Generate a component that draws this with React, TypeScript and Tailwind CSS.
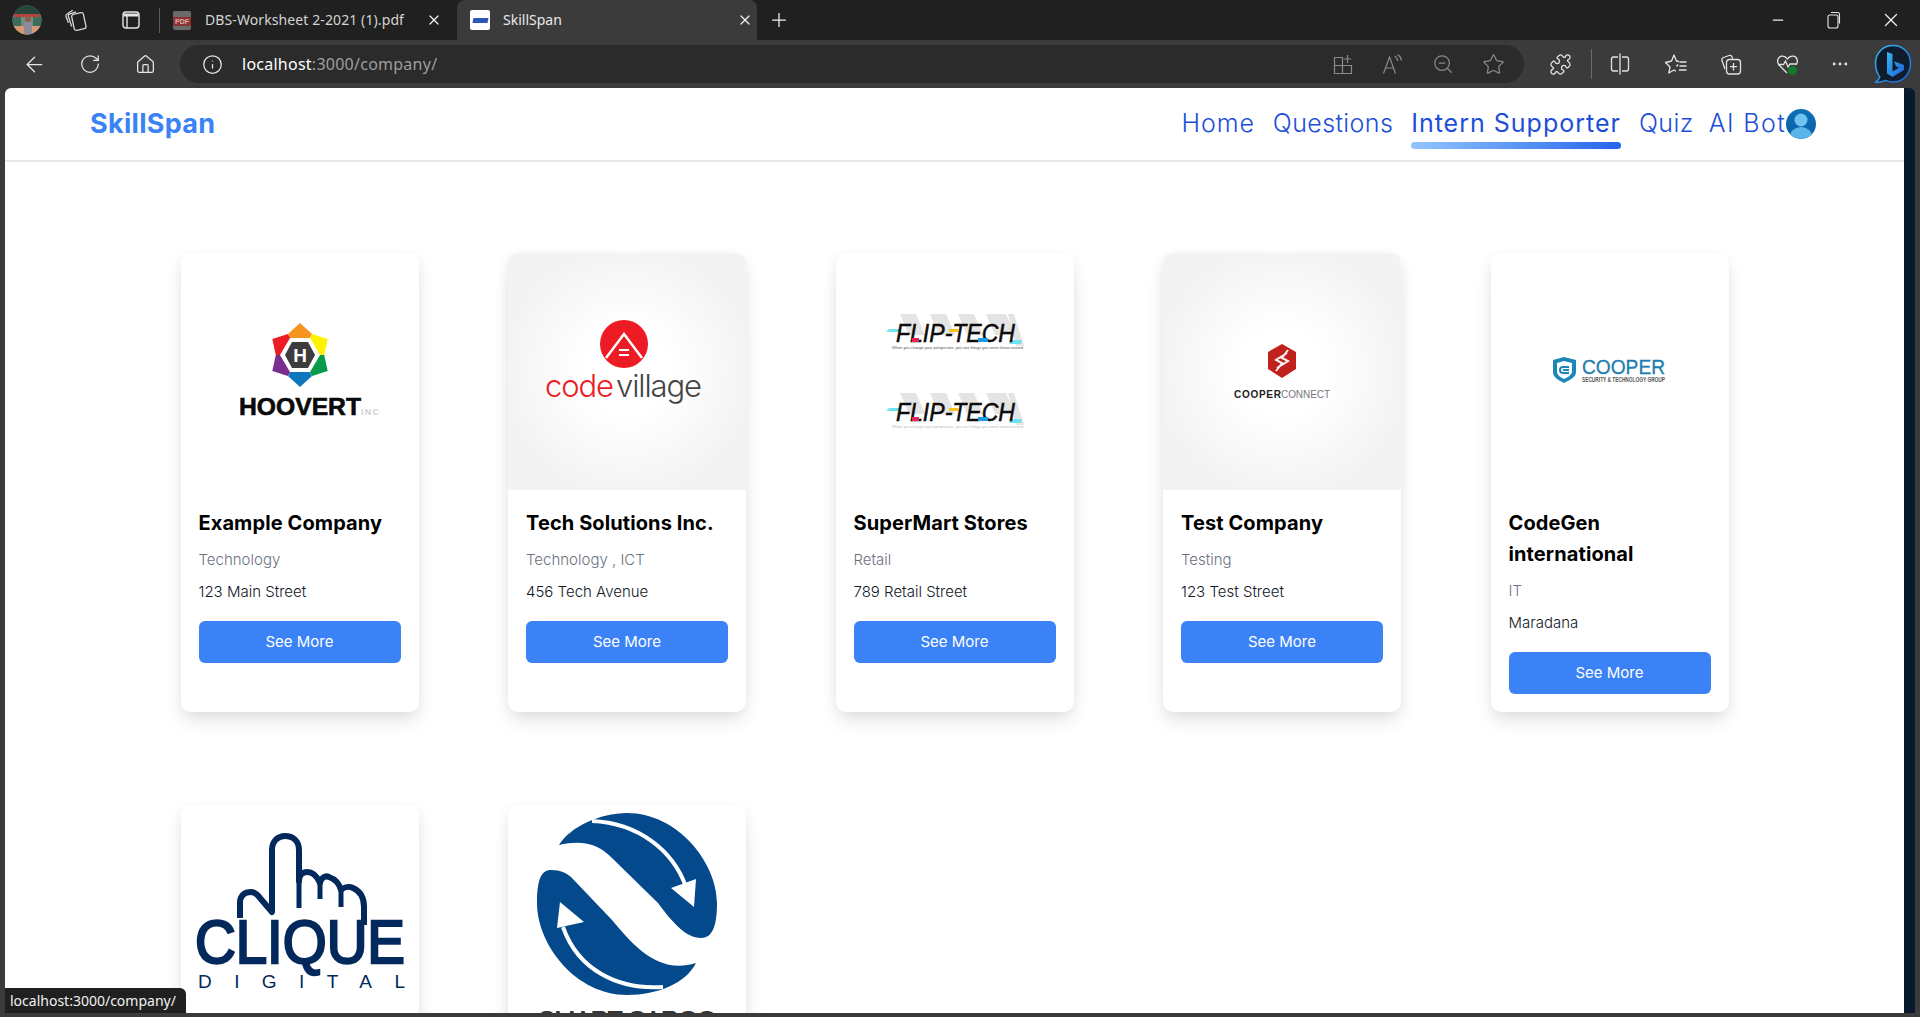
import type { ReactNode } from "react";
import {
  ArrowLeft,
  Ellipsis,
  House,
  Info,
  Minus,
  Plus,
  Puzzle,
  RotateCw,
  Star,
  X,
  ZoomOut,
} from "lucide-react";

const stroke = { strokeWidth: 1.25, absoluteStrokeWidth: true };

function IconSlot({ className, children }: { className: string; children: ReactNode }) {
  return <div className={`flex shrink-0 items-center justify-center ${className}`}>{children}</div>;
}

function Profile() {
  return (
    <svg width="30" height="30" viewBox="0 0 30 30">
      <clipPath id="profile">
        <circle cx="15" cy="15" r="14.5" />
      </clipPath>
      <g clipPath="url(#profile)">
        <rect width="30" height="30" fill="#6f8f7f" />
        <rect width="30" height="10" fill="#27463c" />
        <rect x="2" y="9" width="26" height="3" fill="#b8433d" />
        <rect y="12" width="9" height="9" fill="#3f6b5b" />
        <rect x="21" y="12" width="9" height="9" fill="#3f6b5b" />
        <rect y="21" width="30" height="9" fill="#d59a74" />
        <circle cx="16" cy="14" r="3" fill="#8a5f4a" />
        <rect x="12" y="17" width="8" height="13" fill="#8d8b98" />
      </g>
    </svg>
  );
}

function TabsIcon() {
  return (
    <svg width="24" height="24" viewBox="0 0 22 22" fill="none" stroke="#d8d8d8" strokeWidth="1.2">
      <rect x="8" y="5" width="11" height="15" rx="2" transform="rotate(-12 13 12)" />
      <path d="M7 17 4 7.500c-.3-1 .2-1.800 1.100-2L11 3.500" />
      <path d="M4 13.500 1.800 7.500c-.3-1 .2-1.700 1-2L8 2" />
    </svg>
  );
}

function VerticalTabsIcon() {
  return (
    <svg width="20" height="20" viewBox="0 0 20 20" fill="none" stroke="#e4e4e4" strokeWidth="1.4">
      <rect x="2" y="2" width="16" height="16" rx="3" />
      <path d="M6 5.500V18" />
      <path d="M2.500 5h15" strokeWidth="3" />
    </svg>
  );
}

function PdfIcon() {
  return (
    <div className="relative h-[19px] w-[18px] rounded-[2px] bg-[#6a6a6a]">
      <div className="absolute left-0 top-[6px] flex h-[9px] w-[18px] items-center justify-center bg-[#8c3232] font-['Liberation_Sans',sans-serif] text-[7px] font-bold leading-none text-[#d9b0b0]">
        PDF
      </div>
    </div>
  );
}

function Favicon() {
  return (
    <div className="flex h-5 w-5 items-center justify-center rounded-[2px] bg-white">
      <div className="h-[5px] w-[15px] -skew-x-12 bg-[#2c55b5]" />
    </div>
  );
}

function RestoreIcon() {
  return (
    <svg width="14" height="18" viewBox="0 0 14 18" fill="none" stroke="#e6e6e6" strokeWidth="1.1">
      <rect x="1" y="4" width="10" height="13" rx="2" />
      <path d="M4 1.500h6.500c1.200 0 2 .8 2 2v9" />
    </svg>
  );
}

function AddTileIcon() {
  return (
    <svg width="20" height="22" viewBox="0 0 20 22" fill="none" stroke="#8a8a8a" strokeWidth="1.2">
      <path d="M1.500 4.500h8v8h-8zM1.500 12.500h8v8h-8zM9.500 12.500h9v8h-9z" />
      <path d="M14.500 2v8M10.800 6h7.400" />
    </svg>
  );
}

function ReadAloudIcon() {
  return (
    <svg width="22" height="22" viewBox="0 0 22 22" fill="none" stroke="#8a8a8a" strokeWidth="1.2">
      <path d="M1.500 20.500 7.500 4l6 16.500M3.700 15h7.600" />
      <path d="M12.500 3c2 1 3 2.600 3.200 5M15.500 1.500c2.300 1.400 3.700 3.400 4 6" />
    </svg>
  );
}

function SplitIcon() {
  return (
    <svg width="20" height="24" viewBox="0 0 20 24" fill="none" stroke="#e4e4e4" strokeWidth="1.3">
      <path d="M8 5H3.500C2.200 5 1.500 5.800 1.500 7v10c0 1.200.7 2 2 2H8M12 5h4.500c1.300 0 2 .8 2 2v10c0 1.200-.7 2-2 2H12" />
      <path d="M10 1.500v21" />
    </svg>
  );
}

function FavoritesIcon() {
  return (
    <svg width="24" height="24" viewBox="0 0 24 24" fill="none" stroke="#e4e4e4" strokeWidth="1.3" strokeLinejoin="round">
      <path d="M15 9.500 12.500 9 10 3 7.500 9 1.500 10.500 6 15 4.800 21 10 18l2 1.200M14 12.500l-1.500 2" />
      <path d="M15.500 10h7M15.500 14h7M15 18h7.500" />
    </svg>
  );
}

function CollectionsIcon() {
  return (
    <svg width="22" height="24" viewBox="0 0 22 24" fill="none" stroke="#e4e4e4" strokeWidth="1.3">
      <path d="M5 17 2 8.500c-.5-1.500.2-2.500 1.500-3L9 3.500c1.500-.5 2.500 0 3 1.200l.5 2" />
      <rect x="6.500" y="7.500" width="14" height="14.500" rx="3" />
      <path d="M13.500 11v7.500M10 14.700h7" />
    </svg>
  );
}

function HeartIcon() {
  return (
    <svg width="24" height="24" viewBox="0 0 24 24" fill="none">
      <path
        d="M11 21 3 13C.5 10 1.500 5 5.500 4.200c2.500-.4 4.500.6 6 2.800 1.500-2.200 3.500-3.200 6-2.800C21.500 5 22.500 10 20 13"
        stroke="#e4e4e4"
        strokeWidth="1.300"
      />
      <path d="M2 12.500h5.500l2-3.500 2.500 6 2-3h6" stroke="#e4e4e4" strokeWidth="1.300" />
      <circle cx="16.500" cy="18.500" r="4.500" fill="#117a2b" />
    </svg>
  );
}

function BingIcon() {
  return (
    <svg width="40" height="40" viewBox="0 0 40 40" fill="none">
      <defs>
        <linearGradient id="bingRing" x1="0" y1="0" x2="1" y2="1">
          <stop offset="0" stopColor="#35c1f1" />
          <stop offset="1" stopColor="#1a5fe0" />
        </linearGradient>
        <linearGradient id="bingB" x1="0" y1="0" x2="1" y2="1">
          <stop offset="0" stopColor="#37b8f0" />
          <stop offset="1" stopColor="#1d62d8" />
        </linearGradient>
      </defs>
      <path
        d="M20 1.500C9.500 1.500 2.500 9.500 2.500 19.500c0 5.500 1.700 10 4.300 13.500-.5 1.800-2 3.500-4 5.200 3.500.4 7-.3 9.800-1.800 2.300 1 4.800 1.600 7.400 1.600 10 0 17.500-8 17.500-18.500S30 1.500 20 1.500z"
        fill="#101c2c"
        stroke="url(#bingRing)"
        strokeWidth="1.500"
      />
      <path d="M14 8l5.500 2v17.500l6.500-3.800-3-1.500-2-5 10 3.800v5L19.500 33 14 29.500z" fill="url(#bingB)" />
    </svg>
  );
}

function UserAvatar() {
  return (
    <svg width="30" height="30" viewBox="0 0 30 30">
      <defs>
        <linearGradient id="avatarBg" x1="0" y1="0" x2="0" y2="1">
          <stop offset="0" stopColor="#0d6fb8" />
          <stop offset="1" stopColor="#0b5fa5" />
        </linearGradient>
      </defs>
      <clipPath id="avatarClip">
        <circle cx="15" cy="15" r="15" />
      </clipPath>
      <g clipPath="url(#avatarClip)">
        <rect width="30" height="30" fill="url(#avatarBg)" />
        <circle cx="15" cy="11" r="6.500" fill="#6fc3ee" />
        <ellipse cx="15" cy="27" rx="11" ry="9" fill="#58b6e8" />
      </g>
    </svg>
  );
}

function BrowserChrome() {
  return (
    <div className="shrink-0">
      <div className="flex h-10 items-center bg-[#202020] font-['Noto_Sans',sans-serif] text-sm text-[#d4d4d4]">
        <IconSlot className="ml-3 w-[30px]">
          <Profile />
        </IconSlot>
        <IconSlot className="ml-[22px] w-6">
          <TabsIcon />
        </IconSlot>
        <IconSlot className="ml-[31px] w-6">
          <VerticalTabsIcon />
        </IconSlot>
        <div className="ml-[16px] h-[25px] w-px bg-[#5a5a5a]" />
        <div className="flex h-full w-[297px] shrink-0 items-center pl-[13px]">
          <PdfIcon />
          <span className="ml-[14px] w-[202px] truncate tracking-[0.1px]">DBS-Worksheet 2-2021 (1).pdf</span>
          <X className="ml-[19px] text-[#f0f0f0]" size={16} {...stroke} />
        </div>
        <div className="flex h-full w-[300px] shrink-0 items-center rounded-t-lg bg-[#3b3b3b] pl-[13px] text-[#e8e8e8]">
          <Favicon />
          <span className="ml-[13px] w-[234px]">SkillSpan</span>
          <X className="text-[#f0f0f0]" size={16} {...stroke} />
        </div>
        <IconSlot className="ml-[9px] w-[26px]">
          <Plus className="text-[#f0f0f0]" size={22} {...stroke} />
        </IconSlot>
        <div className="ml-auto flex items-center">
          <IconSlot className="w-14">
            <Minus className="text-[#f0f0f0]" size={16} {...stroke} />
          </IconSlot>
          <IconSlot className="w-14">
            <RestoreIcon />
          </IconSlot>
          <IconSlot className="w-[58px]">
            <X className="text-[#f0f0f0]" size={22} {...stroke} />
          </IconSlot>
        </div>
      </div>
      <div className="flex h-12 items-center bg-[#3b3b3b] text-[#e6e6e6]">
        <IconSlot className="ml-[6px] w-14">
          <ArrowLeft size={25} {...stroke} />
        </IconSlot>
        <IconSlot className="w-14">
          <RotateCw size={22} {...stroke} />
        </IconSlot>
        <IconSlot className="w-[55px]">
          <House size={21} {...stroke} />
        </IconSlot>
        <div className="ml-[7px] flex h-[38px] w-[1344px] shrink-0 items-center rounded-full bg-[#2b2b2b]">
          <IconSlot className="ml-[20px] w-[24px]">
            <Info size={21} {...stroke} />
          </IconSlot>
          <span className="ml-[18px] font-['Noto_Sans',sans-serif] text-[16px] tracking-[0.25px] text-white">
            localhost<span className="text-[#9e9e9e]">:3000/company/</span>
          </span>
          <div className="ml-auto flex items-center pr-[6px] text-[#8a8a8a]">
            <IconSlot className="w-[50px]">
              <AddTileIcon />
            </IconSlot>
            <IconSlot className="w-[50px]">
              <ReadAloudIcon />
            </IconSlot>
            <IconSlot className="w-[50px]">
              <ZoomOut size={22} {...stroke} />
            </IconSlot>
            <IconSlot className="w-[50px]">
              <Star size={23} {...stroke} />
            </IconSlot>
          </div>
        </div>
        <IconSlot className="ml-[14px] w-[44px]">
          <Puzzle size={23} {...stroke} />
        </IconSlot>
        <div className="ml-[9px] h-[30px] w-px bg-[#6a6a6a]" />
        <IconSlot className="ml-[6px] w-[44px]">
          <SplitIcon />
        </IconSlot>
        <IconSlot className="ml-[12px] w-[44px]">
          <FavoritesIcon />
        </IconSlot>
        <IconSlot className="ml-[11px] w-[44px]">
          <CollectionsIcon />
        </IconSlot>
        <IconSlot className="ml-[13px] w-[44px]">
          <HeartIcon />
        </IconSlot>
        <IconSlot className="ml-[8px] w-[44px]">
          <Ellipsis size={20} {...stroke} />
        </IconSlot>
        <IconSlot className="ml-[9px] w-[44px]">
          <BingIcon />
        </IconSlot>
      </div>
    </div>
  );
}

function Header() {
  return (
    <header className="flex h-[74px] shrink-0 items-center justify-between border-b-2 border-[#e5e7eb] pl-[85px] pr-[88px]">
      <span className="text-[27px] font-bold tracking-[0.3px] text-[#3b82f6]">SkillSpan</span>
      <nav className="flex items-center text-[25px] font-light tracking-[0.4px] text-[#1d4ed8]">
        <a className="mr-[18px] tracking-[0.9px]">Home</a>
        <a className="mr-[18px]">Questions</a>
        <a className="relative mr-[18px] font-normal tracking-[1px]">
          Intern Supporter
          <span className="absolute left-0 right-0 top-[37px] h-[7px] rounded bg-gradient-to-r from-[#93c5fd] to-[#2563eb]" />
        </a>
        <a className="mr-[15px]">Quiz</a>
        <a className="tracking-[1.4px]">AI Bot</a>
        <UserAvatar />
      </nav>
    </header>
  );
}

function HoovertLogo() {
  const colors = ["#f7941d", "#fff200", "#0a9b4a", "#0e76bc", "#7b2d90", "#ed1c24"];
  return (
    <svg width="238" height="237" viewBox="0 0 238 237">
      <g transform="translate(119 102)">
        {colors.map((color, i) => (
          <path key={color} d="M0 0-12-21 0-32 12-21z" fill={color} transform={`rotate(${i * 60})`} />
        ))}
        <path d="M-20 0-10-17H10L20 0 10 17H-10z" fill="#fff" />
        <path d="M-15 0-8-13H8L15 0 8 13H-8z" fill="#3c3c3c" />
        <text y="7" textAnchor="middle" fontFamily="Liberation Sans, sans-serif" fontWeight="700" fontSize="19" fill="#fff">
          H
        </text>
      </g>
      <text x="58" y="162" textLength="122" lengthAdjust="spacingAndGlyphs" fontFamily="Liberation Sans, sans-serif" fontWeight="700" fontSize="24" fill="#0a0a0a" stroke="#0a0a0a" strokeWidth="0.6">
        HOOVERT
      </text>
      <text x="180" y="162" textLength="18" fontFamily="Liberation Sans, sans-serif" fontWeight="700" fontSize="9" fill="#cfcfcf">
        INC
      </text>
    </svg>
  );
}

function CodeVillageLogo() {
  return (
    <svg width="238" height="237" viewBox="0 0 238 237">
      <circle cx="116" cy="91" r="24" fill="#ed1c24" />
      <path d="M98 105 116 81 134 105" fill="none" stroke="#fff" strokeWidth="2.500" />
      <path d="M111 97h10M111 102h10" stroke="#fff" strokeWidth="2" />
      <text x="37" y="144" textLength="69" fontFamily="Inter, sans-serif" fontWeight="300" fontSize="31" fill="#ed1c24">
        code
      </text>
      <text x="108" y="144" textLength="86" fontFamily="Inter, sans-serif" fontWeight="300" fontSize="31" fill="#444">
        village
      </text>
    </svg>
  );
}

function FlipTechMark({ y, tagline }: { y: number; tagline: string }) {
  return (
    <g transform={`translate(50 ${y})`}>
      <path d="M14 0h16l9 21H23zM44 0h16l9 21H53zM72 0h16l9 21H81zM100 0h20l9 21H109zM122 0h6l10 32h-8z" fill="#e4e4e4" />
      <path d="M0 18 3 15H14L12 18zM126 26h10l-1 4H123z" fill="#6fe3ee" />
      <text x="10" y="28" textLength="119" lengthAdjust="spacingAndGlyphs" fontFamily="Liberation Sans, sans-serif" fontStyle="italic" fontSize="25" fill="#0c0c0c" stroke="#0c0c0c" strokeWidth="0.5">
        FLIP-TECH
      </text>
      <rect x="26" y="24" width="7" height="4" fill="#e8265e" />
      <rect x="63" y="15" width="9" height="3" fill="#f6c21c" />
      <rect x="92" y="24" width="10" height="4" fill="#1f9be0" />
      <text x="6" y="35" textLength="131" fontFamily="Liberation Sans, sans-serif" fontSize="4" fill={tagline}>
        When you change your perspective, you see things you never knew existed
      </text>
    </g>
  );
}

function FlipTechLogo() {
  return (
    <svg width="238" height="237" viewBox="0 0 238 237">
      <FlipTechMark y={61} tagline="#555" />
      <FlipTechMark y={140} tagline="#bbb" />
    </svg>
  );
}

function CooperConnectLogo() {
  return (
    <svg width="238" height="237" viewBox="0 0 238 237">
      <path d="M119 91 133 99V116L119 125 105 116V99z" fill="#c1211c" />
      <path d="M124 100 113 107 119 110 113 118M114 115 125 108 119 105 125 97" fill="none" stroke="#f4f4f4" strokeWidth="2" />
      <text x="71" y="145" textLength="47" fontFamily="Liberation Sans, sans-serif" fontWeight="700" fontSize="10" fill="#222">
        COOPER
      </text>
      <text x="118" y="145" textLength="49" fontFamily="Liberation Sans, sans-serif" fontSize="10" fill="#777">
        CONNECT
      </text>
    </svg>
  );
}

function CooperLogo() {
  return (
    <svg width="238" height="237" viewBox="0 0 238 237">
      <path d="M73 104 85 107V119C85 124 79 127 73 130 67 127 62 124 62 119V107z" fill="#1c86b8" />
      <path d="M73 108 81 110V118C81 122 77 124 73 126 69 124 66 122 66 118V110z" fill="#fff" />
      <path d="M78 114H72a3 3 0 1 0 0 6H78M72 117H78" fill="none" stroke="#1c86b8" strokeWidth="2" />
      <text x="91" y="121" textLength="83" lengthAdjust="spacingAndGlyphs" fontFamily="Liberation Sans, sans-serif" fontSize="21" fill="#1c7db0" stroke="#1c7db0" strokeWidth="0.3">
        COOPER
      </text>
      <text x="91" y="129" textLength="83" lengthAdjust="spacingAndGlyphs" fontFamily="Liberation Sans, sans-serif" fontWeight="700" fontSize="7" fill="#555">
        SECURITY &amp; TECHNOLOGY GROUP
      </text>
    </svg>
  );
}

function CliqueLogo() {
  return (
    <svg width="238" height="237" viewBox="0 0 238 237">
      <path
        d="M59 113V98C59 90 64 87 70 87 74 87 77 90 79 93L91 107V45C91 36 97 31 104 31 112 31 118 36 118 45V76C118 70 122 67 126 67 132 67 136 71 139 78 140 73 144 70 148 72 154 74 158 78 160 85 163 82 168 81 172 83 179 86 183 92 183 102V120"
        fill="none"
        stroke="#03295c"
        strokeWidth="6"
        strokeLinejoin="round"
      />
      <path d="M118 76V103M139 78V94M160 85V102" fill="none" stroke="#03295c" strokeWidth="5" />
      <text x="14" y="158" textLength="210" lengthAdjust="spacingAndGlyphs" fontFamily="Liberation Sans, sans-serif" fontSize="62" fill="#03295c" stroke="#03295c" strokeWidth="2.500">
        CLIQUE
      </text>
      <text x="17" y="183" textLength="207" fontFamily="Liberation Sans, sans-serif" fontSize="19" fill="#03295c">
        DIGITAL
      </text>
    </svg>
  );
}

function SmartCargoLogo() {
  return (
    <svg width="238" height="237" viewBox="0 0 238 237">
      <path
        d="M51 40C62 22 92 8 119 8 170 8 209 58 209 98 209 122 204 133 193 133 178 133 165 118 150 98L104 53C92 40 75 34 51 40z"
        fill="#04498c"
      />
      <path
        d="M188 158C178 178 150 190 119 190 68 190 29 140 29 98 29 75 33 65 43 65 53 65 58 68 63 72L104 115C125 140 150 170 188 158z"
        fill="#04498c"
      />
      <path d="M84 16C130 18 165 45 178 82" fill="none" stroke="#fff" strokeWidth="4" />
      <path d="M188 74 186 102 163 83z" fill="#fff" />
      <path d="M55 122C70 165 110 185 155 182" fill="none" stroke="#fff" strokeWidth="4" />
      <path d="M52 97 76 117 49 123z" fill="#fff" />
      <text x="30" y="224" textLength="179" fontFamily="Liberation Sans, sans-serif" fontSize="26" fill="#333">
        SMART CARGO
      </text>
    </svg>
  );
}

interface Company {
  name: string;
  category?: string;
  address?: string;
  logo: ReactNode;
  shaded?: boolean;
}

const companies: Company[] = [
  { name: "Example Company", category: "Technology", address: "123 Main Street", logo: <HoovertLogo /> },
  { name: "Tech Solutions Inc.", category: "Technology , ICT", address: "456 Tech Avenue", logo: <CodeVillageLogo />, shaded: true },
  { name: "SuperMart Stores", category: "Retail", address: "789 Retail Street", logo: <FlipTechLogo /> },
  { name: "Test Company", category: "Testing", address: "123 Test Street", logo: <CooperConnectLogo />, shaded: true },
  { name: "CodeGen international", category: "IT", address: "Maradana", logo: <CooperLogo /> },
  { name: "Clique Digital", logo: <CliqueLogo /> },
  { name: "Smart Cargo", logo: <SmartCargoLogo /> },
];

function CompanyCard({ company }: { company: Company }) {
  return (
    <div className="flex flex-col overflow-hidden rounded-[10px] bg-white shadow-[0_10px_20px_-3px_rgba(0,0,0,0.12),0_2px_12px_rgba(0,0,0,0.04)]">
      <div
        className={
          company.shaded
            ? "h-[237px] shrink-0 bg-[radial-gradient(circle,#ffffff_25%,#f3f3f3_75%)]"
            : "h-[237px] shrink-0 bg-white"
        }
      >
        {company.logo}
      </div>
      {company.category ? (
        <div className="flex flex-1 flex-col p-[18px]">
          <h2 className="text-[20px] font-bold leading-[31px] tracking-[0.1px] text-black">{company.name}</h2>
          <p className="mt-[9px] text-[15px] font-light leading-6 text-[#6b7280]">{company.category}</p>
          <p className="mt-2 text-[15px] font-light leading-6 text-[#111827]">{company.address}</p>
          <button className="mt-[17px] h-[42px] w-full rounded-md bg-[#3b82f6] text-[15px] text-white">See More</button>
        </div>
      ) : null}
    </div>
  );
}

export default function App() {
  return (
    <div className="flex h-[1017px] flex-col overflow-hidden bg-[#3b3b3b] font-[Inter,sans-serif]">
      <BrowserChrome />
      <div className="relative flex min-h-0 flex-1 pb-1 pl-[5px] pr-[5px]">
        <div className="flex min-w-0 flex-1 flex-col overflow-hidden rounded-tl-md bg-white">
          <Header />
          <main className="grid grid-cols-[repeat(5,238px)] gap-x-[89.5px] gap-y-[93px] pl-[175.5px] pt-[91px]">
            {companies.map((company) => (
              <CompanyCard company={company} key={company.name} />
            ))}
          </main>
        </div>
        <div className="w-[11px] shrink-0 rounded-tr-md bg-[#061a2b]" />
        <div className="absolute bottom-1 left-[5px] flex h-[25px] w-[181px] items-center rounded-tr-md bg-[#202020] pl-[5px] font-['Noto_Sans',sans-serif] text-sm text-[#f0f0f0]">
          localhost:3000/company/
        </div>
      </div>
    </div>
  );
}
